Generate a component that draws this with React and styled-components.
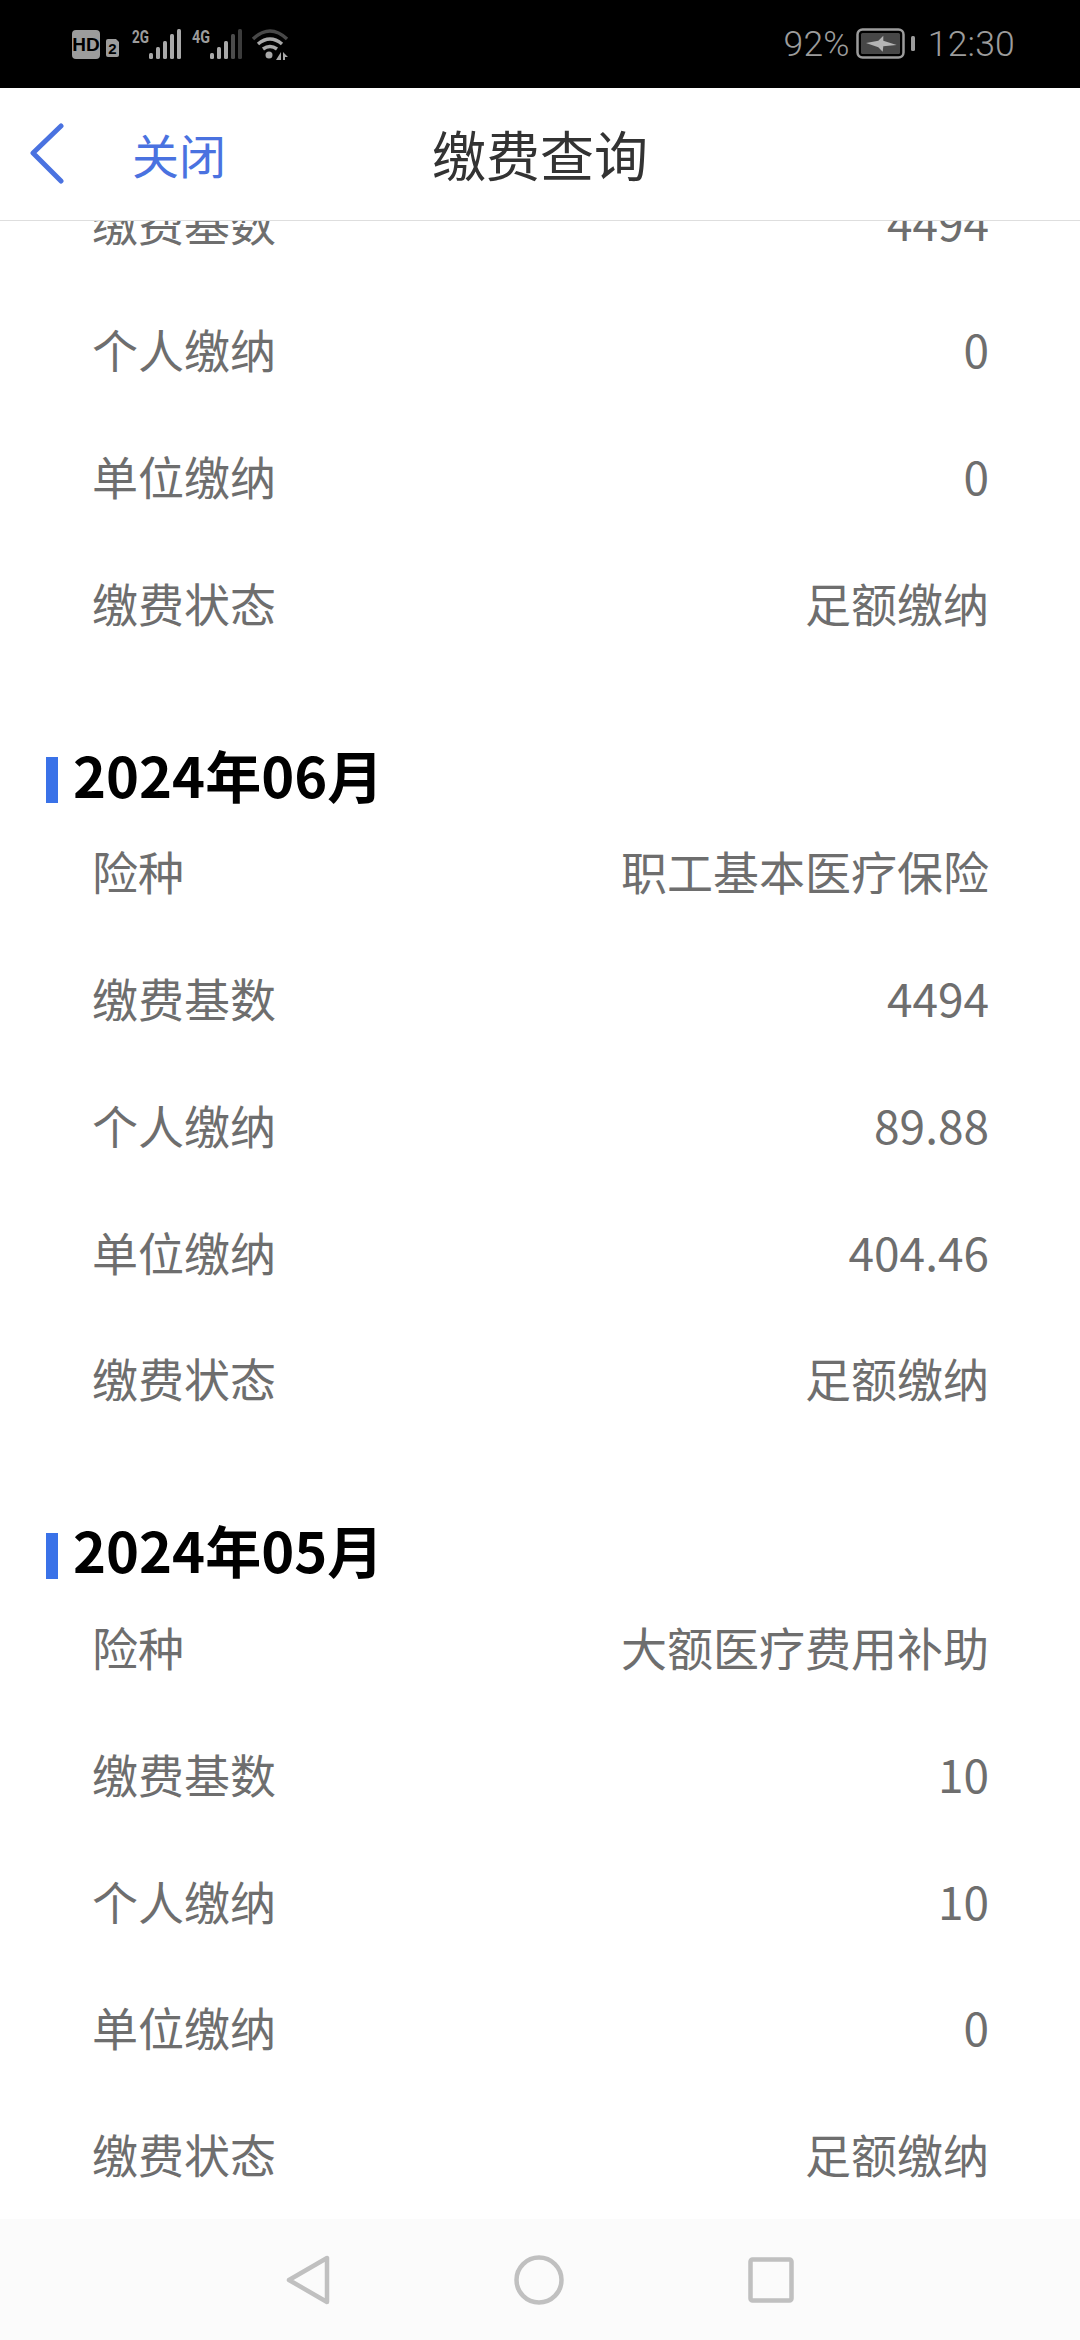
import React from "react";
import styled, { createGlobalStyle } from "styled-components";

const GlobalStyle = createGlobalStyle`
  html, body {
    margin: 0;
    padding: 0;
    background: #fff;
    font-family: "Noto Sans CJK SC", "Noto Sans", sans-serif;
  }
`;

const Page = styled.div`
  width: 1080px;
  height: 2340px;
  display: flex;
  flex-direction: column;
  overflow: hidden;
  background: #fff;
`;

const StatusBar = styled.div`
  height: 88px;
  flex: none;
  background: #000;
  display: flex;
  align-items: center;
  justify-content: space-between;
  padding: 0 65px 0 71px;
  box-sizing: border-box;
`;

const StatusRight = styled.div`
  display: flex;
  align-items: center;
  color: #9c9c9c;
  font-family: "Roboto", sans-serif;
  font-weight: 300;
  font-size: 35.5px;
  letter-spacing: 0.2px;
`;

const Time = styled.span`
  margin-left: 12px;
`;

const Battery = styled.svg`
  margin-left: 6px;
`;

const Header = styled.div`
  height: 133px;
  flex: none;
  display: grid;
  grid-template-columns: 1fr auto 1fr;
  align-items: center;
  box-sizing: border-box;
  border-bottom: 1px solid #dedede;
  background: #fff;
`;

const HeaderLeft = styled.div`
  display: flex;
  align-items: center;
  padding-left: 28px;
`;

const CloseLink = styled.span`
  margin-left: 68px;
  font-size: 47px;
  line-height: 60px;
  color: #4a72e0;
`;

const Title = styled.div`
  font-size: 54px;
  line-height: 70px;
  color: #333;
`;

const Scroller = styled.div`
  flex: 1;
  overflow: hidden;
  background: #fff;
`;

const ScrollContent = styled.div`
  margin-top: -63px;
`;

const SectionTitle = styled.div`
  display: flex;
  align-items: center;
  height: 68px;
  margin-top: 74px;
  padding-left: 46px;
  font-size: 56px;
  font-weight: 700;
  color: #000;
`;

const Marker = styled.span`
  width: 12px;
  height: 46px;
  margin: 14px 15px 0 0;
  background: #3a72e8;
`;

const Row = styled.div`
  height: 126.75px;
  display: flex;
  align-items: center;
  justify-content: space-between;
  padding: 0 91px 0 92px;
  font-size: 46px;
  color: #6e6e6e;
`;

const NavBar = styled.div`
  height: 121px;
  flex: none;
  background: #fbfbfb;
  display: flex;
  align-items: center;
  justify-content: center;
  gap: 184px;
  box-sizing: border-box;
`;

const sections = [
  {
    rows: [
      ["缴费基数", "4494"],
      ["个人缴纳", "0"],
      ["单位缴纳", "0"],
      ["缴费状态", "足额缴纳"],
    ],
  },
  {
    month: "2024年06月",
    rows: [
      ["险种", "职工基本医疗保险"],
      ["缴费基数", "4494"],
      ["个人缴纳", "89.88"],
      ["单位缴纳", "404.46"],
      ["缴费状态", "足额缴纳"],
    ],
  },
  {
    month: "2024年05月",
    rows: [
      ["险种", "大额医疗费用补助"],
      ["缴费基数", "10"],
      ["个人缴纳", "10"],
      ["单位缴纳", "0"],
      ["缴费状态", "足额缴纳"],
    ],
  },
];

const barHeights = [6, 12, 18, 25, 30];

const SignalBars = ({ x, fills }) => (
  <>
    {barHeights.map((h, i) => (
      <rect key={i} x={x + i * 7} y={59 - h} width="4" height={h} rx="1.5" fill={fills[i]} />
    ))}
  </>
);

const SignalIcons = () => (
  <svg width="222" height="34" viewBox="71 27 222 34">
    <rect x="72" y="30" width="28" height="29" rx="4" fill="#9c9c9c" />
    <text x="86" y="51" textAnchor="middle" fontFamily="Liberation Sans" fontWeight="700" fontSize="19" fill="#000">HD</text>
    <path d="M108 39h8l3 3v13q0 2-2 2h-9q-2 0-2-2V41q0-2 2-2z" fill="#9c9c9c" />
    <text x="112.5" y="54" textAnchor="middle" fontFamily="Liberation Sans" fontWeight="700" fontSize="15" fill="#000">2</text>
    <text x="132" y="43" fontFamily="Roboto" fontWeight="700" fontSize="18" fill="#9c9c9c" textLength="17" lengthAdjust="spacingAndGlyphs">2G</text>
    <SignalBars x={149} fills={["#a8a8a8", "#a8a8a8", "#a8a8a8", "#a8a8a8", "#a8a8a8"]} />
    <text x="192" y="43" fontFamily="Roboto" fontWeight="700" fontSize="18" fill="#9c9c9c" textLength="18" lengthAdjust="spacingAndGlyphs">4G</text>
    <SignalBars x={210} fills={["#a8a8a8", "#a8a8a8", "#a8a8a8", "#4c4c4c", "#3c3c3c"]} />
    <path d="M253 39q17-16 34 0" fill="none" stroke="#484848" strokeWidth="3.5" />
    <path d="M258 44q12-10 24 0" fill="none" stroke="#a8a8a8" strokeWidth="3.5" />
    <path d="M263 49q7-5 14 0" fill="none" stroke="#a8a8a8" strokeWidth="3.5" />
    <circle cx="269" cy="55" r="3.5" fill="#a8a8a8" />
    <path d="M281 52v8h-5zM283 52l5 5h-5zM283 57h2v3h-2z" fill="#a8a8a8" />
  </svg>
);

const App = () => {
  return (
    <Page>
      <GlobalStyle />
      <StatusBar>
        <SignalIcons />
        <StatusRight>
          <span>92%</span>
          <Battery width="60" height="32" viewBox="0 0 60 32">
            <rect x="1.5" y="1.5" width="46" height="28" rx="5" fill="none" stroke="#9c9c9c" strokeWidth="2.5" />
            <rect x="5" y="5" width="39" height="21" rx="1.5" fill="#474747" />
            <rect x="55" y="8" width="4" height="15" rx="1.5" fill="#9c9c9c" />
            <path d="M10 15l12.3-2.3 5-5v5L40.7 17l-13.4 1.3-.6 5.4-4.4-4.4z" fill="#b4b4b4" />
          </Battery>
          <Time>12:30</Time>
        </StatusRight>
      </StatusBar>
      <Header>
        <HeaderLeft>
          <svg width="36" height="62" viewBox="0 0 36 62">
            <path d="M33 3L5 30l28 28" fill="none" stroke="#4a72e0" strokeWidth="5" strokeLinecap="round" strokeLinejoin="round" />
          </svg>
          <CloseLink>关闭</CloseLink>
        </HeaderLeft>
        <Title>缴费查询</Title>
        <div />
      </Header>
      <Scroller>
        <ScrollContent>
          {sections.map((section, index) => (
            <div key={index}>
              {section.month && (
                <SectionTitle>
                  <Marker />
                  {section.month}
                </SectionTitle>
              )}
              {section.rows.map(([label, value]) => (
                <Row key={label}>
                  <span>{label}</span>
                  <span>{value}</span>
                </Row>
              ))}
            </div>
          ))}
        </ScrollContent>
      </Scroller>
      <NavBar>
        <svg width="44" height="50" viewBox="0 0 44 50">
          <path d="M41 3v44L3 25z" fill="none" stroke="#c0c0c0" strokeWidth="4.5" strokeLinejoin="round" />
        </svg>
        <svg width="50" height="50" viewBox="0 0 50 50">
          <circle cx="25" cy="25" r="22.5" fill="none" stroke="#c0c0c0" strokeWidth="4.5" />
        </svg>
        <svg width="46" height="46" viewBox="0 0 46 46">
          <rect x="2.5" y="2.5" width="41" height="41" rx="2" fill="none" stroke="#c0c0c0" strokeWidth="4.5" />
        </svg>
      </NavBar>
    </Page>
  );
};

export default App;
